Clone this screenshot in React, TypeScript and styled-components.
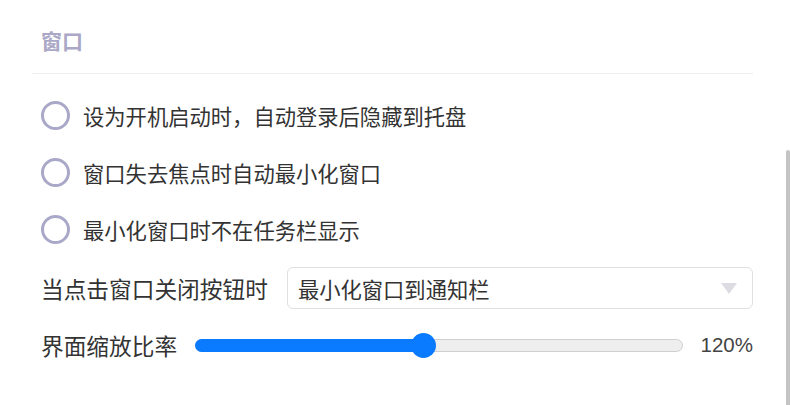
import styled, { createGlobalStyle } from 'styled-components';

const GlobalStyle = createGlobalStyle`
  html, body {
    margin: 0;
    padding: 0;
    background: #ffffff;
  }

  body {
    font-family: 'Liberation Sans', 'Noto Sans CJK SC', sans-serif;
    color: #333333;
    overflow: hidden;
  }
`;

const Page = styled.div`
  position: relative;
  width: 790px;
  height: 405px;
  box-sizing: border-box;
  padding: 28px 37px 0 32px;
`;

const SectionTitle = styled.h2`
  margin: 0;
  padding: 0 0 17px 9px;
  font-size: 21px;
  line-height: 28px;
  font-weight: 700;
  color: #aaa8c6;
  border-bottom: 1px solid #eeeeee;
`;

const SectionBody = styled.div`
  display: flex;
  flex-direction: column;
  padding: 13px 0 0 9px;
`;

const RadioRow = styled.label`
  display: flex;
  align-items: center;
  gap: 13px;
  height: 57px;
  font-size: 21.3px;
  color: #333333;
  cursor: pointer;
`;

const RadioCircle = styled.span<{ $checked?: boolean }>`
  width: 29px;
  height: 29px;
  box-sizing: border-box;
  border: 3px solid #aaa8c8;
  border-radius: 50%;
  flex-shrink: 0;
  background: ${({ $checked }) => ($checked ? '#aaa8c8' : 'transparent')};
`;

const FieldRow = styled.div<{ $top?: number; $gap?: number }>`
  display: flex;
  align-items: center;
  gap: ${({ $gap }) => $gap ?? 18}px;
  height: 42px;
  margin-top: ${({ $top }) => $top ?? 0}px;
`;

const FieldLabel = styled.span`
  font-size: 22.7px;
  color: #333333;
  white-space: nowrap;
`;

const SelectBox = styled.div`
  flex: 1;
  height: 42px;
  box-sizing: border-box;
  display: flex;
  align-items: center;
  justify-content: space-between;
  padding: 0 15px 0 10px;
  border: 1px solid #e0e0e0;
  border-radius: 6px;
  font-size: 21.3px;
  color: #333333;
`;

const Caret = styled.span`
  width: 0;
  height: 0;
  border-left: 8.5px solid transparent;
  border-right: 8.5px solid transparent;
  border-top: 11px solid #dcdce2;
`;

const SliderTrack = styled.div`
  position: relative;
  flex: 1;
  height: 13px;
  box-sizing: border-box;
  border: 1px solid #cfcfcf;
  border-radius: 7px;
  background: #eeeeee;
`;

const SliderFill = styled.div`
  position: absolute;
  left: -1px;
  top: -1px;
  bottom: -1px;
  border-radius: 7px;
  background: #0a7bff;
`;

const SliderThumb = styled.div`
  position: absolute;
  top: 50%;
  width: 25px;
  height: 25px;
  margin: -12.5px 0 0 -12.5px;
  border-radius: 50%;
  background: #0a7bff;
`;

const SliderValue = styled.span`
  font-size: 20.5px;
  color: #444444;
  white-space: nowrap;
`;

const ScrollThumb = styled.div`
  position: absolute;
  right: 0;
  top: 150px;
  bottom: 0;
  width: 4px;
  border-radius: 3px 3px 0 0;
  background: #c4c4c4;
`;

const options = [
  '设为开机启动时，自动登录后隐藏到托盘',
  '窗口失去焦点时自动最小化窗口',
  '最小化窗口时不在任务栏显示',
];

const scale = { min: 50, max: 200, value: 120 };

export default function App() {
  const ratio = (scale.value - scale.min) / (scale.max - scale.min);
  const thumbLeft = `calc(12.5px + (100% - 25px) * ${ratio})`;

  return (
    <>
      <GlobalStyle />
      <Page>
        <SectionTitle>窗口</SectionTitle>
        <SectionBody>
          {options.map((text) => (
            <RadioRow key={text}>
              <RadioCircle />
              {text}
            </RadioRow>
          ))}

          <FieldRow $top={9} $gap={19}>
            <FieldLabel>当点击窗口关闭按钮时</FieldLabel>
            <SelectBox>
              最小化窗口到通知栏
              <Caret />
            </SelectBox>
          </FieldRow>

          <FieldRow $top={15}>
            <FieldLabel>界面缩放比率</FieldLabel>
            <SliderTrack>
              <SliderFill style={{ width: thumbLeft }} />
              <SliderThumb style={{ left: thumbLeft }} />
            </SliderTrack>
            <SliderValue>{scale.value}%</SliderValue>
          </FieldRow>
        </SectionBody>
        <ScrollThumb />
      </Page>
    </>
  );
}
